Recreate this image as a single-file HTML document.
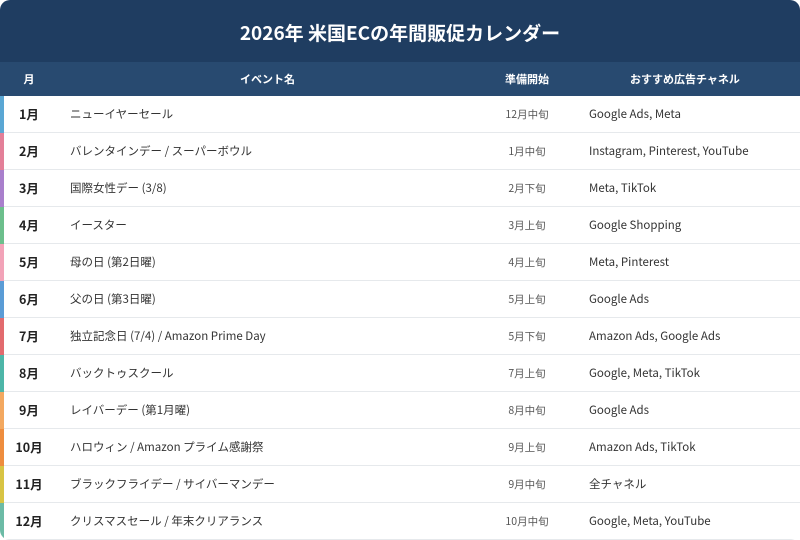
<!DOCTYPE html>
<html><head><meta charset="utf-8"><style>
body{margin:0;width:800px;height:538px;overflow:hidden;background:#fff;font-family:"Noto Sans CJK JP","Liberation Sans",sans-serif;}
.wrap{position:absolute;left:0;top:0;width:800px;height:540px;border-radius:10px;overflow:hidden;background:#fff;}
.title{height:62px;background:#1f3d61;color:#fff;font-weight:bold;font-size:19px;text-align:center;line-height:66px;}
.hdr{height:34px;background:#284a70;color:#fff;font-weight:bold;font-size:11px;position:relative;}
.hdr span,.row span{position:absolute;top:0;}
.hdr span{line-height:35px;}
.row{height:36px;border-bottom:1px solid #e6e9ec;position:relative;font-size:11.5px;color:#333;}
.row span{line-height:37px;}
.bar{left:0;width:4px;height:37px;}
.row .m{left:14px;width:30px;text-align:center;font-weight:bold;font-size:12.5px;color:#222;line-height:35px;}
.e{left:70px;}
.d{left:487px;width:80px;text-align:center;font-size:10.5px;color:#555;}
.c{left:589px;}
</style></head><body><div class="wrap">
<div class="title">2026年 米国ECの年間販促カレンダー</div>
<div class="hdr"><span style="left:14px;width:30px;text-align:center">月</span><span style="left:240px">イベント名</span><span style="left:487px;width:80px;text-align:center">準備開始</span><span style="left:630px">おすすめ広告チャネル</span></div>
<div class="row"><span class="bar" style="background:#5aa7d4"></span><span class="m">1月</span><span class="e">ニューイヤーセール</span><span class="d">12月中旬</span><span class="c">Google Ads, Meta</span></div>
<div class="row"><span class="bar" style="background:#e37f98"></span><span class="m">2月</span><span class="e">バレンタインデー / スーパーボウル</span><span class="d">1月中旬</span><span class="c">Instagram, Pinterest, YouTube</span></div>
<div class="row"><span class="bar" style="background:#a97fcc"></span><span class="m">3月</span><span class="e">国際女性デー (3/8)</span><span class="d">2月下旬</span><span class="c">Meta, TikTok</span></div>
<div class="row"><span class="bar" style="background:#6cbf8c"></span><span class="m">4月</span><span class="e">イースター</span><span class="d">3月上旬</span><span class="c">Google Shopping</span></div>
<div class="row"><span class="bar" style="background:#f2a3b8"></span><span class="m">5月</span><span class="e">母の日 (第2日曜)</span><span class="d">4月上旬</span><span class="c">Meta, Pinterest</span></div>
<div class="row"><span class="bar" style="background:#5a9cd6"></span><span class="m">6月</span><span class="e">父の日 (第3日曜)</span><span class="d">5月上旬</span><span class="c">Google Ads</span></div>
<div class="row"><span class="bar" style="background:#e26b6e"></span><span class="m">7月</span><span class="e">独立記念日 (7/4) / Amazon Prime Day</span><span class="d">5月下旬</span><span class="c">Amazon Ads, Google Ads</span></div>
<div class="row"><span class="bar" style="background:#4db6a8"></span><span class="m">8月</span><span class="e">バックトゥスクール</span><span class="d">7月上旬</span><span class="c">Google, Meta, TikTok</span></div>
<div class="row"><span class="bar" style="background:#f3a860"></span><span class="m">9月</span><span class="e">レイバーデー (第1月曜)</span><span class="d">8月中旬</span><span class="c">Google Ads</span></div>
<div class="row"><span class="bar" style="background:#ee8d3e"></span><span class="m">10月</span><span class="e">ハロウィン / Amazon プライム感謝祭</span><span class="d">9月上旬</span><span class="c">Amazon Ads, TikTok</span></div>
<div class="row"><span class="bar" style="background:#d8c444"></span><span class="m">11月</span><span class="e">ブラックフライデー / サイバーマンデー</span><span class="d">9月中旬</span><span class="c">全チャネル</span></div>
<div class="row"><span class="bar" style="background:#6cbba6"></span><span class="m">12月</span><span class="e">クリスマスセール / 年末クリアランス</span><span class="d">10月中旬</span><span class="c">Google, Meta, YouTube</span></div>
</div></body></html>
